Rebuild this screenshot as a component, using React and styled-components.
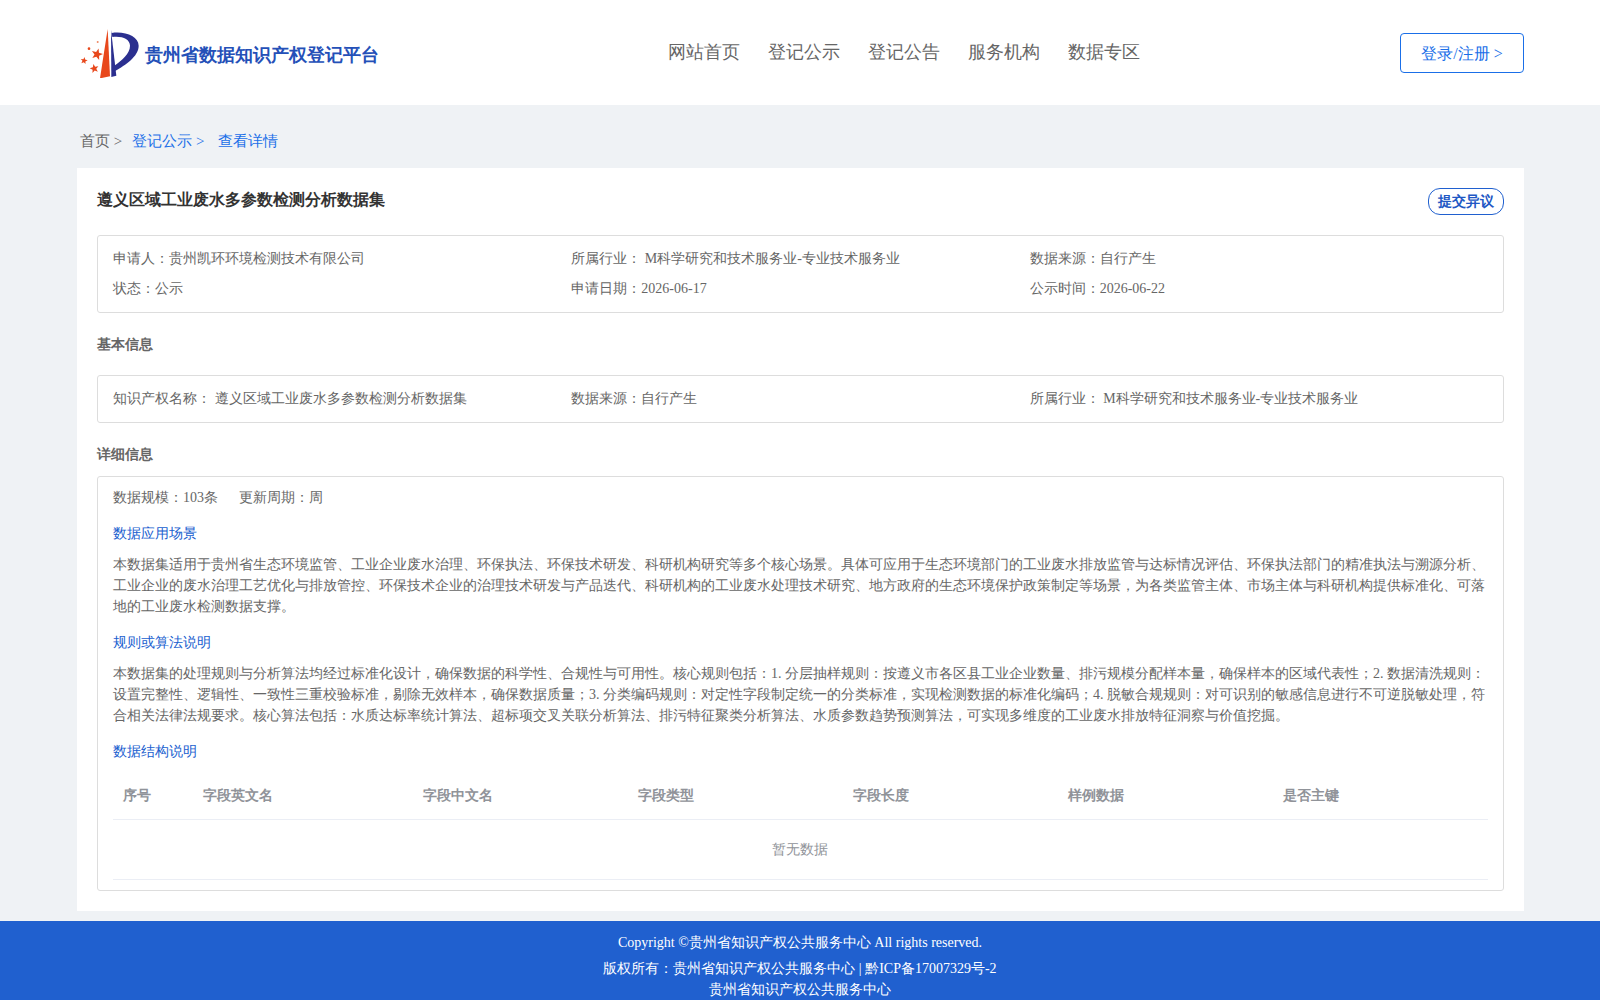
import React from 'react';
import styled, { createGlobalStyle } from 'styled-components';

const GlobalStyle = createGlobalStyle`
  html, body {
    margin: 0;
    padding: 0;
    background: #eff2f5;
    font-family: "Liberation Serif", serif;
    font-size: 14px;
    color: #666;
  }
`;

const Header = styled.header`
  display: flex;
  align-items: center;
  height: 105px;
  padding: 0 76px 0 80px;
  background: #fff;
  box-sizing: border-box;
`;

const Logo = styled.div`
  display: flex;
  align-items: center;
  gap: 5px;
  width: 299px;
  flex: none;

  svg {
    flex: none;
  }
`;

const BrandName = styled.span`
  font-size: 18px;
  font-weight: 700;
  color: #2450b8;
  white-space: nowrap;
  padding-top: 5px;
`;

const Nav = styled.nav`
  display: flex;
  gap: 28px;
  margin-left: 289px;
  padding-bottom: 2px;
`;

const NavItem = styled.a`
  font-size: 18px;
  color: #666;
  line-height: 24px;
`;

const LoginButton = styled.button`
  margin-left: auto;
  width: 124px;
  height: 40px;
  padding: 3px 0 0;
  border: 1px solid #1a6fe8;
  border-radius: 4px;
  background: #fff;
  color: #1a6fe8;
  font-family: inherit;
  font-size: 16px;
`;

const Main = styled.main`
  padding: 0 76px 0 77px;
`;

const Crumbs = styled.div`
  display: flex;
  align-items: center;
  height: 63px;
  padding: 10px 0 0 3px;
  box-sizing: border-box;
  font-size: 15px;
`;

const Crumb = styled.span`
  color: ${(p) => (p.$active ? '#1a6fe8' : '#666')};
  margin-right: ${(p) => p.$gap || 0}px;
`;

const Card = styled.section`
  background: #fff;
  padding: 20px;
  height: 743px;
  box-sizing: border-box;
`;

const TitleRow = styled.div`
  display: flex;
  justify-content: space-between;
  align-items: flex-start;
  height: 47px;
`;

const Title = styled.h1`
  margin: 0;
  font-size: 16px;
  line-height: 24px;
  font-weight: 700;
  color: #333;
`;

const ObjectionButton = styled.button`
  width: 76px;
  height: 27px;
  padding: 0;
  border: 1px solid #2060cf;
  border-radius: 12px;
  background: #fff;
  color: #2157c4;
  font-family: inherit;
  font-size: 14px;
  font-weight: 700;
`;

const InfoBox = styled.div`
  display: grid;
  grid-template-columns: repeat(3, 1fr);
  grid-auto-rows: 30px;
  align-items: center;
  padding: 8px 15px;
  border: 1px solid #ddd;
  border-radius: 3px;
`;

const InfoCell = styled.div`
  line-height: 20px;
  white-space: nowrap;
`;

const SectionTitle = styled.h2`
  margin: 0;
  font-size: 14px;
  font-weight: 700;
  color: #666;
  line-height: 20px;
  padding: ${(p) => p.$pad};
`;

const DetailBox = styled.div`
  height: 415px;
  box-sizing: border-box;
  padding: 9px 15px 0;
  border: 1px solid #ddd;
  border-radius: 3px;
`;

const ScaleRow = styled.div`
  display: flex;
  gap: 21px;
  line-height: 24px;
`;

const SubHeading = styled.div`
  color: #2060cf;
  line-height: 20px;
  margin: ${(p) => p.$top}px 0 10px;
`;

const Paragraph = styled.p`
  margin: 0;
  line-height: 21px;
`;

const Table = styled.div`
  margin-top: 12px;
`;

const TableHead = styled.div`
  display: grid;
  grid-template-columns: 80px 220px repeat(5, 215px);
  height: 46px;
  padding-bottom: 1px;
  align-items: center;
  border-bottom: 1px solid #ebeef5;
  box-sizing: border-box;
`;

const HeadCell = styled.div`
  padding-left: 10px;
  font-weight: 700;
  color: #909399;
`;

const Empty = styled.div`
  height: 60px;
  line-height: 60px;
  padding-right: 2px;
  text-align: center;
  color: #909399;
  border-bottom: 1px solid #ebeef5;
  box-sizing: border-box;
`;

const Footer = styled.footer`
  margin-top: 10px;
  height: 79px;
  overflow: hidden;
  background: #2060cf;
  color: #fff;
  text-align: center;
  padding-top: 11px;
  box-sizing: border-box;
`;

const FooterLine = styled.div`
  line-height: 21px;
  margin-bottom: ${(p) => p.$gap || 0}px;
`;

// five pointed star, tilted a little like the ones in the logo
const starPoints = (cx, cy, r, tilt) =>
  Array.from({ length: 10 }, (_, i) => {
    const radius = i % 2 ? r * 0.42 : r;
    const angle = ((i * 36 + tilt - 90) * Math.PI) / 180;
    return `${(cx + radius * Math.cos(angle)).toFixed(1)},${(cy + radius * Math.sin(angle)).toFixed(1)}`;
  }).join(' ');

const LogoMark = () => (
  <svg width="60" height="50" viewBox="15 15 180 150">
    <polygon points="98,18 105,160 75,166" fill="#e8481c" />
    <polygon points="108,20 124,158 109,162" fill="#2b2f8f" />
    <path
      d="M110 30 C150 24 191 40 191 68 C191 100 152 126 120 144 L118 128 C140 112 165 92 165 68 C165 48 140 38 112 42 Z"
      fill="#2b2f8f"
    />
    <polygon points={starPoints(66, 94, 18, 15)} fill="#e8481c" />
    <polygon points={starPoints(58, 137, 14, -12)} fill="#e8481c" />
    <polygon points={starPoints(27, 113, 11, 10)} fill="#e8481c" />
    <circle cx="42" cy="77" r="4" fill="#e8481c" />
    <circle cx="68" cy="57" r="3" fill="#ee8a66" />
  </svg>
);

const navItems = ['网站首页', '登记公示', '登记公告', '服务机构', '数据专区'];
const columns = ['序号', '字段英文名', '字段中文名', '字段类型', '字段长度', '样例数据', '是否主键'];

export default function App() {
  return (
    <>
      <GlobalStyle />
      <Header>
        <Logo>
          <LogoMark />
          <BrandName>贵州省数据知识产权登记平台</BrandName>
        </Logo>
        <Nav>
          {navItems.map((item) => (
            <NavItem key={item}>{item}</NavItem>
          ))}
        </Nav>
        <LoginButton>登录/注册 &gt;</LoginButton>
      </Header>
      <Main>
        <Crumbs>
          <Crumb $gap={10}>首页 &gt;</Crumb>
          <Crumb $active $gap={14}>登记公示 &gt;</Crumb>
          <Crumb $active>查看详情</Crumb>
        </Crumbs>
        <Card>
          <TitleRow>
            <Title>遵义区域工业废水多参数检测分析数据集</Title>
            <ObjectionButton>提交异议</ObjectionButton>
          </TitleRow>
          <InfoBox>
            <InfoCell>申请人：贵州凯环环境检测技术有限公司</InfoCell>
            <InfoCell>所属行业： M科学研究和技术服务业-专业技术服务业</InfoCell>
            <InfoCell>数据来源：自行产生</InfoCell>
            <InfoCell>状态：公示</InfoCell>
            <InfoCell>申请日期：2026-06-17</InfoCell>
            <InfoCell>公示时间：2026-06-22</InfoCell>
          </InfoBox>
          <SectionTitle $pad="22px 0 20px">基本信息</SectionTitle>
          <InfoBox>
            <InfoCell>知识产权名称： 遵义区域工业废水多参数检测分析数据集</InfoCell>
            <InfoCell>数据来源：自行产生</InfoCell>
            <InfoCell>所属行业： M科学研究和技术服务业-专业技术服务业</InfoCell>
          </InfoBox>
          <SectionTitle $pad="22px 0 11px">详细信息</SectionTitle>
          <DetailBox>
            <ScaleRow>
              <span>数据规模：103条</span>
              <span>更新周期：周</span>
            </ScaleRow>
            <SubHeading $top={14}>数据应用场景</SubHeading>
            <Paragraph>
              本数据集适用于贵州省生态环境监管、工业企业废水治理、环保执法、环保技术研发、科研机构研究等多个核心场景。具体可应用于生态环境部门的工业废水排放监管与达标情况评估、环保执法部门的精准执法与溯源分析、工业企业的废水治理工艺优化与排放管控、环保技术企业的治理技术研发与产品迭代、科研机构的工业废水处理技术研究、地方政府的生态环境保护政策制定等场景，为各类监管主体、市场主体与科研机构提供标准化、可落地的工业废水检测数据支撑。
            </Paragraph>
            <SubHeading $top={16}>规则或算法说明</SubHeading>
            <Paragraph>
              本数据集的处理规则与分析算法均经过标准化设计，确保数据的科学性、合规性与可用性。核心规则包括：1. 分层抽样规则：按遵义市各区县工业企业数量、排污规模分配样本量，确保样本的区域代表性；2. 数据清洗规则：设置完整性、逻辑性、一致性三重校验标准，剔除无效样本，确保数据质量；3. 分类编码规则：对定性字段制定统一的分类标准，实现检测数据的标准化编码；4. 脱敏合规规则：对可识别的敏感信息进行不可逆脱敏处理，符合相关法律法规要求。核心算法包括：水质达标率统计算法、超标项交叉关联分析算法、排污特征聚类分析算法、水质参数趋势预测算法，可实现多维度的工业废水排放特征洞察与价值挖掘。
            </Paragraph>
            <SubHeading $top={16}>数据结构说明</SubHeading>
            <Table>
              <TableHead>
                {columns.map((c) => (
                  <HeadCell key={c}>{c}</HeadCell>
                ))}
              </TableHead>
              <Empty>暂无数据</Empty>
            </Table>
          </DetailBox>
        </Card>
      </Main>
      <Footer>
        <FooterLine $gap={5}>Copyright ©贵州省知识产权公共服务中心 All rights reserved.</FooterLine>
        <FooterLine>版权所有：贵州省知识产权公共服务中心 | 黔ICP备17007329号-2</FooterLine>
        <FooterLine>贵州省知识产权公共服务中心</FooterLine>
      </Footer>
    </>
  );
}
